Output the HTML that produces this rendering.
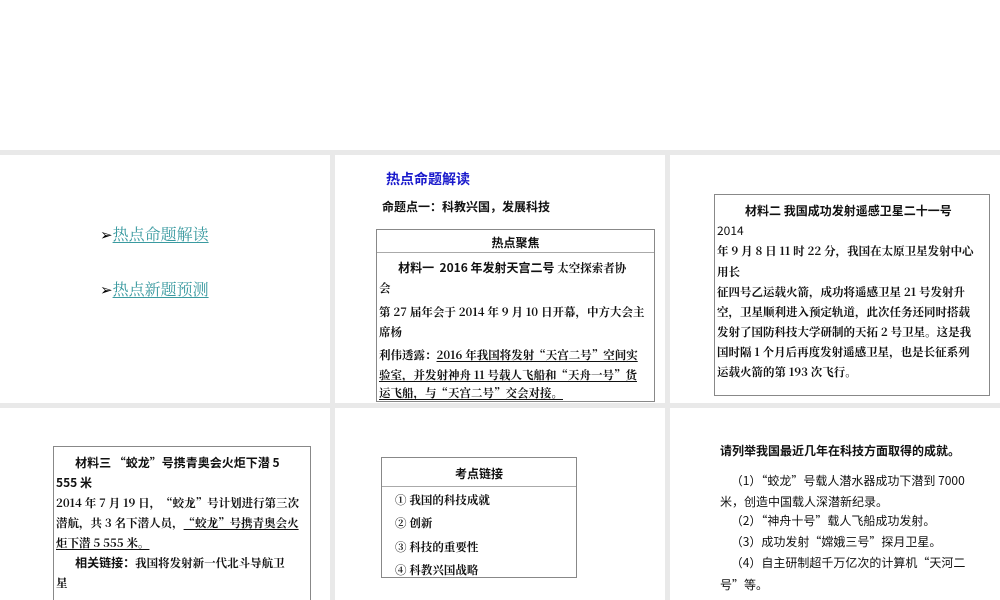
<!DOCTYPE html>
<html><head><meta charset="utf-8"><style>
*{margin:0;padding:0;box-sizing:border-box}
html,body{width:1000px;height:600px;overflow:hidden}
body{position:relative;background:#e9e9e9;font-family:"Noto Sans CJK SC","Liberation Sans",sans-serif;color:#111}
.p{position:absolute;background:#fff;overflow:hidden}
.t{position:absolute;white-space:nowrap;font-size:12px;line-height:14px}
.s{font-family:"Noto Serif CJK SC","Liberation Serif",serif;font-weight:700;font-size:11.5px}
.b{font-weight:bold}
.u{text-decoration:underline;text-underline-offset:2px}
.box{position:absolute;border:1px solid #888;background:#fff}
.lk{position:absolute;font-family:"Noto Serif CJK SC","Liberation Serif",serif;font-size:16px;color:#3a9aa0;white-space:nowrap}
.lk span{text-decoration:underline;text-underline-offset:2px}
.lk i{font-style:normal;color:#000;font-size:15px}
</style></head><body>
<div class="p" style="left:0;top:0;width:1000px;height:150px"></div>
<div class="p" style="left:0;top:155px;width:330px;height:248px"></div>
<div class="p" style="left:335px;top:155px;width:330px;height:248px"></div>
<div class="p" style="left:670px;top:155px;width:330px;height:248px"></div>
<div class="p" style="left:0;top:408px;width:330px;height:192px"></div>
<div class="p" style="left:335px;top:408px;width:330px;height:192px"></div>
<div class="p" style="left:670px;top:408px;width:330px;height:192px"></div>

<div class="lk" style="left:100px;top:222px"><i>➢</i><span>热点命题解读</span></div>
<div class="lk" style="left:100px;top:277px"><i>➢</i><span>热点新题预测</span></div>

<div class="t b" style="left:386px;top:170px;font-size:14px;line-height:18px;color:#1a1acc">热点命题解读</div>
<div class="t b" style="left:382px;top:200px">命题点一：科教兴国，发展科技</div>
<div class="box" style="left:376px;top:229px;width:279px;height:173px"></div>
<div style="position:absolute;left:377px;top:252px;width:277px;border-top:1px solid #aaa"></div>
<div class="t b" style="left:376px;width:279px;text-align:center;top:236px">热点聚焦</div>
<div class="t" style="left:379px;top:261px"><b>&nbsp;&nbsp;&nbsp;&nbsp;&nbsp;&nbsp;&nbsp;材料一&nbsp; 2016 年发射天宫二号</b> <span class="s">太空探索者协</span></div>
<div class="t s" style="left:379px;top:281px">会</div>
<div class="t s" style="left:379px;top:305px">第 27 届年会于 2014 年 9 月 10 日开幕，中方大会主</div>
<div class="t s" style="left:379px;top:325px">席杨</div>
<div class="t s" style="left:379px;top:348px">利伟透露：<span class="u">2016 年我国将发射“天宫二号”空间实</span></div>
<div class="t s u" style="left:379px;top:368px">验室，并发射神舟 11 号载人飞船和“天舟一号”货</div>
<div class="t s u" style="left:379px;top:386px">运飞船，与“天宫二号”交会对接。</div>

<div class="box" style="left:714px;top:194px;width:276px;height:202px"></div>
<div class="t b" style="left:745px;top:204px">材料二 我国成功发射遥感卫星二十一号</div>
<div class="t" style="left:717px;top:224px">2014</div>
<div class="t s" style="left:717px;top:244px">年 9 月 8 日 11 时 22 分，我国在太原卫星发射中心</div>
<div class="t s" style="left:717px;top:265px">用长</div>
<div class="t s" style="left:717px;top:285px">征四号乙运载火箭，成功将遥感卫星 21 号发射升</div>
<div class="t s" style="left:717px;top:305px">空，卫星顺利进入预定轨道，此次任务还同时搭载</div>
<div class="t s" style="left:717px;top:325px">发射了国防科技大学研制的天拓 2 号卫星。这是我</div>
<div class="t s" style="left:717px;top:345px">国时隔 1 个月后再度发射遥感卫星，也是长征系列</div>
<div class="t s" style="left:717px;top:365px">运载火箭的第 193 次飞行。</div>

<div class="box" style="left:53px;top:446px;width:258px;height:170px"></div>
<div class="t b" style="left:56px;top:456px">&nbsp;&nbsp;&nbsp;&nbsp;&nbsp;&nbsp;&nbsp;材料三 “蛟龙”号携青奥会火炬下潜 5</div>
<div class="t b" style="left:56px;top:476px">555 米</div>
<div class="t s" style="left:56px;top:496px">2014 年 7 月 19 日，“蛟龙”号计划进行第三次</div>
<div class="t s" style="left:56px;top:516px">潜航，共 3 名下潜人员，<span class="u">“蛟龙”号携青奥会火</span></div>
<div class="t s u" style="left:56px;top:536px">炬下潜 5 555 米。</div>
<div class="t" style="left:56px;top:556px"><b>&nbsp;&nbsp;&nbsp;&nbsp;&nbsp;&nbsp;&nbsp;相关链接：</b><span class="s">我国将发射新一代北斗导航卫</span></div>
<div class="t s" style="left:56px;top:576px">星</div>

<div class="box" style="left:381px;top:457px;width:196px;height:121px"></div>
<div style="position:absolute;left:382px;top:486px;width:194px;border-top:1px solid #aaa"></div>
<div class="t b" style="left:381px;width:196px;text-align:center;top:467px">考点链接</div>
<div class="t s" style="left:395px;top:493px">① 我国的科技成就</div>
<div class="t s" style="left:395px;top:516px">② 创新</div>
<div class="t s" style="left:395px;top:540px">③ 科技的重要性</div>
<div class="t s" style="left:395px;top:563px">④ 科教兴国战略</div>

<div class="t b" style="left:720px;top:444px">请列举我国最近几年在科技方面取得的成就。</div>
<div class="t" style="left:720px;top:474px">&nbsp;&nbsp;&nbsp;&nbsp;（1）“蛟龙”号载人潜水器成功下潜到 7000</div>
<div class="t" style="left:720px;top:495px">米，创造中国载人深潜新纪录。</div>
<div class="t" style="left:720px;top:514px">&nbsp;&nbsp;&nbsp;&nbsp;（2）“神舟十号”载人飞船成功发射。</div>
<div class="t" style="left:720px;top:535px">&nbsp;&nbsp;&nbsp;&nbsp;（3）成功发射“嫦娥三号”探月卫星。</div>
<div class="t" style="left:720px;top:556px">&nbsp;&nbsp;&nbsp;&nbsp;（4）自主研制超千万亿次的计算机“天河二</div>
<div class="t" style="left:720px;top:578px">号”等。</div>
</body></html>
